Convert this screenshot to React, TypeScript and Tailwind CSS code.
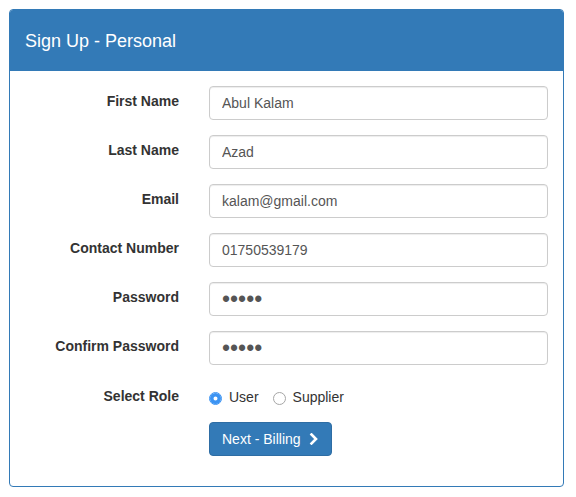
import { useState } from "react";

const fields = [
  { label: "First Name", value: "Abul Kalam", type: "text" },
  { label: "Last Name", value: "Azad", type: "text" },
  { label: "Email", value: "kalam@gmail.com", type: "email" },
  { label: "Contact Number", value: "01750539179", type: "text" },
  { label: "Password", value: "12345", type: "password" },
  { label: "Confirm Password", value: "12345", type: "password" },
];

export default function App() {
  const [role, setRole] = useState("user");

  return (
    <div
      className="min-h-screen bg-white p-[9px] text-[14px] text-[#333]"
      style={{ fontFamily: '"Liberation Sans", Arial, sans-serif' }}
    >
      <div className="w-[555px] rounded-[4px] border border-[#337ab7] bg-white">
        <div className="flex h-[61px] items-center rounded-t-[3px] bg-[#337ab7] px-[15px]">
          <h3 className="text-[18px] leading-none text-white">Sign Up - Personal</h3>
        </div>

        <form
          className="grid grid-cols-[154px_1fr] gap-x-[30px] gap-y-[15px] px-[15px] pt-[15px] pb-[30px]"
          onSubmit={(e) => e.preventDefault()}
        >
          {fields.map((f) => (
            <div key={f.label} className="contents">
              <label className="pt-[5px] text-right font-bold leading-[20px]">{f.label}</label>
              <input
                type={f.type}
                defaultValue={f.value}
                className={
                  "h-[34px] w-full rounded-[4px] border border-[#ccc] bg-white px-[12px] py-[6px] leading-[20px] text-[#555] shadow-[inset_0_1px_1px_rgba(0,0,0,0.075)] outline-none " +
                  (f.type === "password" ? "text-[23px]" : "text-[14px]")
                }
              />
            </div>
          ))}

          <label className="pt-[6px] text-right font-bold leading-[20px]">Select Role</label>
          <div className="flex h-[27px] items-start gap-[14px] pt-[7px]">
            {[
              { id: "user", label: "User" },
              { id: "supplier", label: "Supplier" },
            ].map((r) => (
              <label key={r.id} className="flex cursor-pointer items-start leading-[20px]">
                <input
                  type="radio"
                  name="role"
                  checked={role === r.id}
                  onChange={() => setRole(r.id)}
                  className="mt-[5px] h-[13px] w-[13px] appearance-none rounded-full border border-[#a6a6a6] bg-white checked:border-[#3b93f3] checked:shadow-[inset_0_0_0_3.5px_#3b93f3]"
                />
                <span className="ml-[7px]">{r.label}</span>
              </label>
            ))}
          </div>

          <div />
          <div>
            <button
              type="submit"
              className="flex h-[34px] items-center rounded-[4px] border border-[#2e6da4] bg-[#337ab7] px-[12px] text-[14px] leading-[20px] text-white"
            >
              Next - Billing
              <svg
                width="10"
                height="12"
                viewBox="0 0 10 12"
                className="ml-[8px]"
                aria-hidden="true"
              >
                <path
                  d="M2.5 1.5 L7 6 L2.5 10.5"
                  fill="none"
                  stroke="white"
                  strokeWidth="2.6"
                  strokeLinecap="square"
                />
              </svg>
            </button>
          </div>
        </form>
      </div>
    </div>
  );
}
